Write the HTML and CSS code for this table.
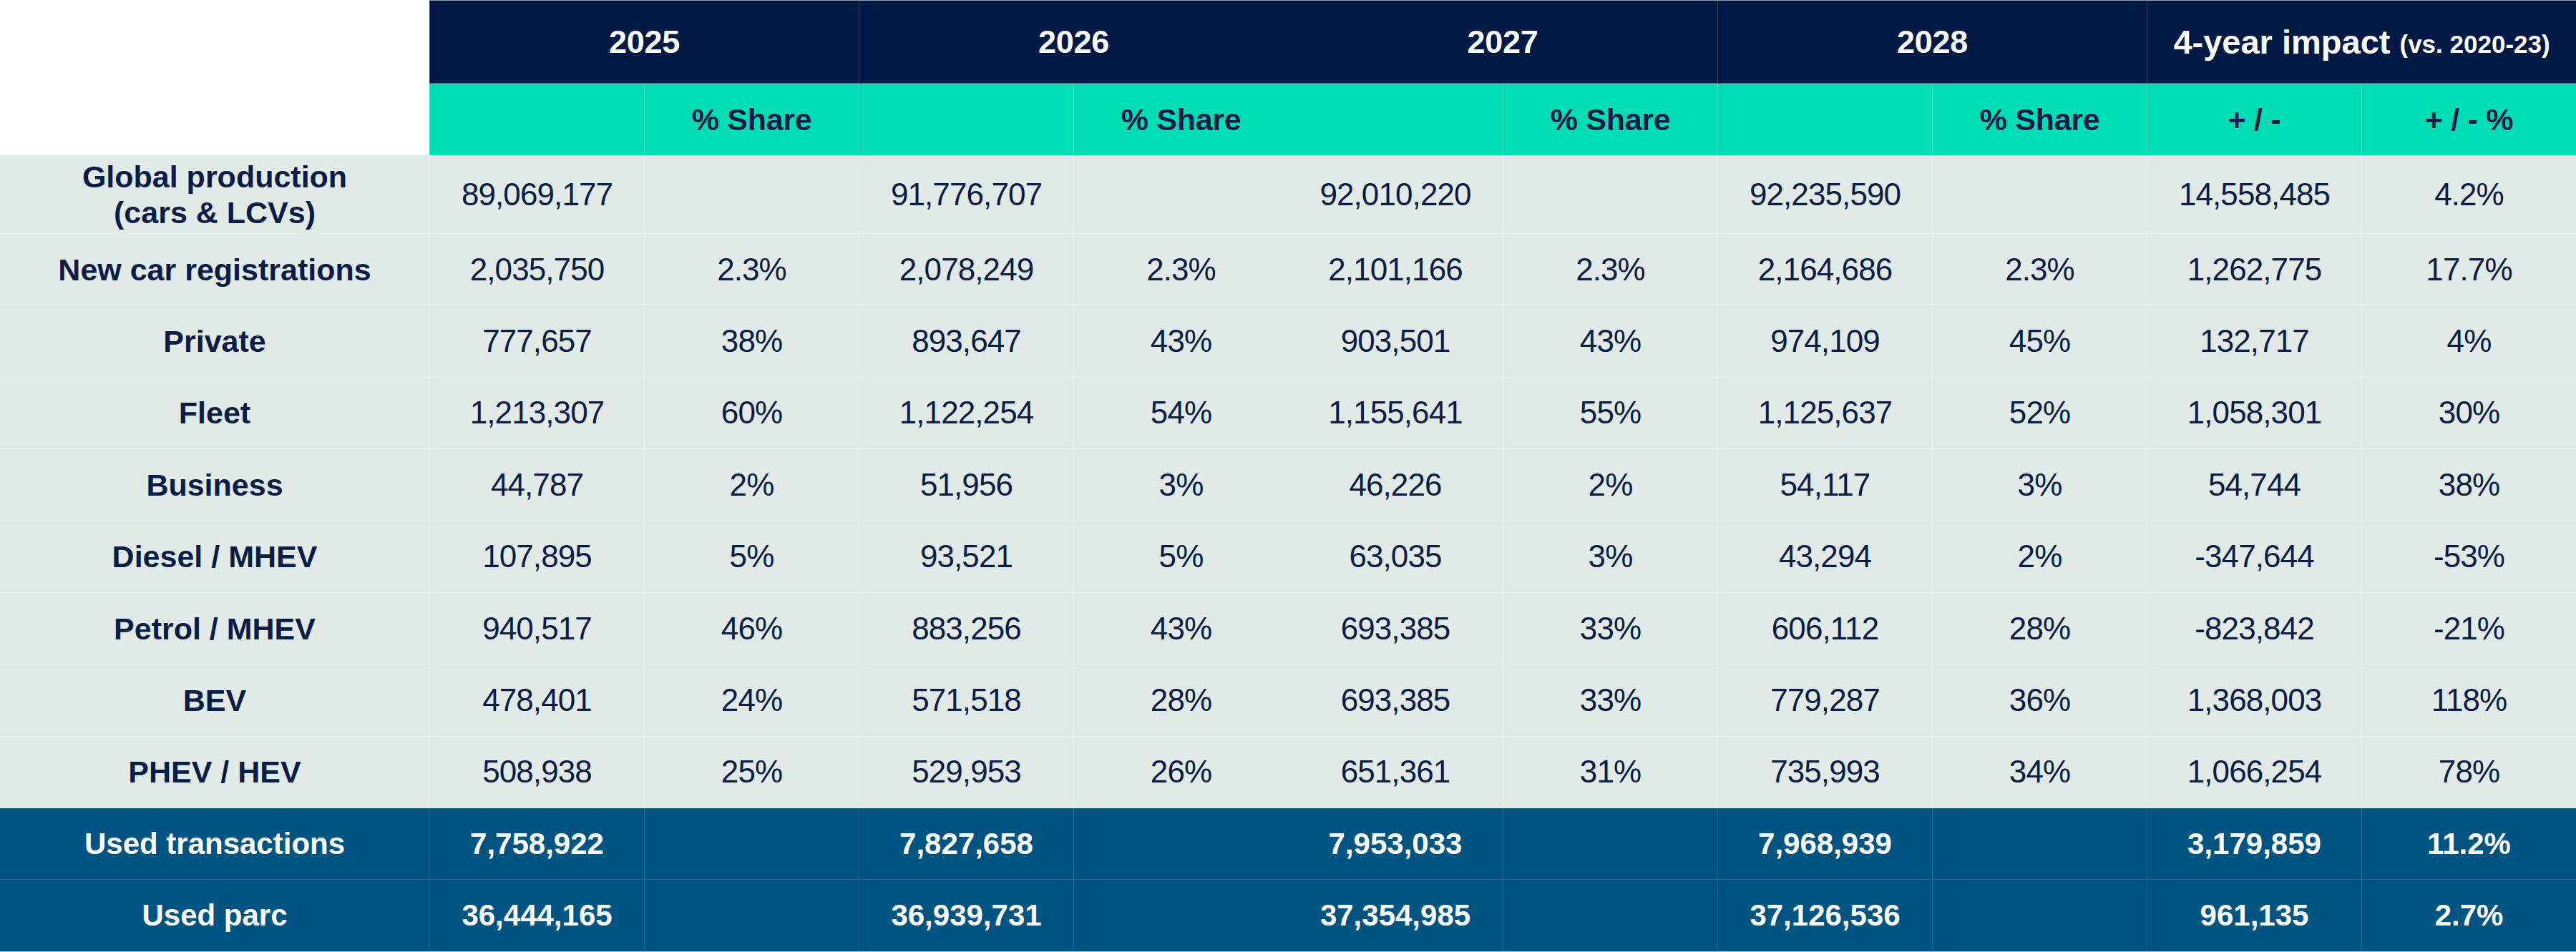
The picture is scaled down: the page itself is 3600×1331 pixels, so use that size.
FILE: index.html
```html
<!DOCTYPE html>
<html lang="en">
<head>
<meta charset="utf-8">
<title>Forecast table</title>
<link rel="stylesheet" href="styles.css">
</head>
<body>
<div class="grid">
  <div class="corner"></div>
  <div class="yr">2025</div>
  <div class="yr">2026</div>
  <div class="yr nb">2027</div>
  <div class="yr">2028</div>
  <div class="yr imp">4-year impact <span class="vs">(vs. 2020-23)</span></div>

  <div class="sub"></div>
  <div class="sub">% Share</div>
  <div class="sub"></div>
  <div class="sub">% Share</div>
  <div class="sub nb"></div>
  <div class="sub">% Share</div>
  <div class="sub"></div>
  <div class="sub">% Share</div>
  <div class="sub">+ / -</div>
  <div class="sub">+ / - %</div>

  <div class="lbl">Global production<br>(cars &amp; LCVs)</div>
  <div class="val">89,069,177</div><div class="val"></div>
  <div class="val">91,776,707</div><div class="val"></div>
  <div class="val nb">92,010,220</div><div class="val"></div>
  <div class="val">92,235,590</div><div class="val"></div>
  <div class="val">14,558,485</div><div class="val">4.2%</div>

  <div class="lbl">New car registrations</div>
  <div class="val">2,035,750</div><div class="val">2.3%</div>
  <div class="val">2,078,249</div><div class="val">2.3%</div>
  <div class="val nb">2,101,166</div><div class="val">2.3%</div>
  <div class="val">2,164,686</div><div class="val">2.3%</div>
  <div class="val">1,262,775</div><div class="val">17.7%</div>

  <div class="lbl">Private</div>
  <div class="val">777,657</div><div class="val">38%</div>
  <div class="val">893,647</div><div class="val">43%</div>
  <div class="val nb">903,501</div><div class="val">43%</div>
  <div class="val">974,109</div><div class="val">45%</div>
  <div class="val">132,717</div><div class="val">4%</div>

  <div class="lbl">Fleet</div>
  <div class="val">1,213,307</div><div class="val">60%</div>
  <div class="val">1,122,254</div><div class="val">54%</div>
  <div class="val nb">1,155,641</div><div class="val">55%</div>
  <div class="val">1,125,637</div><div class="val">52%</div>
  <div class="val">1,058,301</div><div class="val">30%</div>

  <div class="lbl">Business</div>
  <div class="val">44,787</div><div class="val">2%</div>
  <div class="val">51,956</div><div class="val">3%</div>
  <div class="val nb">46,226</div><div class="val">2%</div>
  <div class="val">54,117</div><div class="val">3%</div>
  <div class="val">54,744</div><div class="val">38%</div>

  <div class="lbl">Diesel / MHEV</div>
  <div class="val">107,895</div><div class="val">5%</div>
  <div class="val">93,521</div><div class="val">5%</div>
  <div class="val nb">63,035</div><div class="val">3%</div>
  <div class="val">43,294</div><div class="val">2%</div>
  <div class="val">-347,644</div><div class="val">-53%</div>

  <div class="lbl">Petrol / MHEV</div>
  <div class="val">940,517</div><div class="val">46%</div>
  <div class="val">883,256</div><div class="val">43%</div>
  <div class="val nb">693,385</div><div class="val">33%</div>
  <div class="val">606,112</div><div class="val">28%</div>
  <div class="val">-823,842</div><div class="val">-21%</div>

  <div class="lbl">BEV</div>
  <div class="val">478,401</div><div class="val">24%</div>
  <div class="val">571,518</div><div class="val">28%</div>
  <div class="val nb">693,385</div><div class="val">33%</div>
  <div class="val">779,287</div><div class="val">36%</div>
  <div class="val">1,368,003</div><div class="val">118%</div>

  <div class="lbl">PHEV / HEV</div>
  <div class="val">508,938</div><div class="val">25%</div>
  <div class="val">529,953</div><div class="val">26%</div>
  <div class="val nb">651,361</div><div class="val">31%</div>
  <div class="val">735,993</div><div class="val">34%</div>
  <div class="val">1,066,254</div><div class="val">78%</div>

  <div class="dlbl">Used transactions</div>
  <div class="dval">7,758,922</div><div class="dval"></div>
  <div class="dval">7,827,658</div><div class="dval"></div>
  <div class="dval nb">7,953,033</div><div class="dval"></div>
  <div class="dval">7,968,939</div><div class="dval"></div>
  <div class="dval">3,179,859</div><div class="dval">11.2%</div>

  <div class="dlbl last">Used parc</div>
  <div class="dval last">36,444,165</div><div class="dval last"></div>
  <div class="dval last">36,939,731</div><div class="dval last"></div>
  <div class="dval nb last">37,354,985</div><div class="dval last"></div>
  <div class="dval last">37,126,536</div><div class="dval last"></div>
  <div class="dval last">961,135</div><div class="dval last">2.7%</div>
</div>
</body>
</html>
```

FILE: styles.css
```css
html, body {
  margin: 0;
  padding: 0;
  background: #ffffff;
}

body {
  font-family: "Liberation Sans", Arial, Helvetica, sans-serif;
  color: #0a1d47;
}

.grid {
  display: grid;
  width: 3600px;
  grid-template-columns: 600px repeat(10, 300px);
  grid-template-rows: 117px 100px 110px repeat(8, 100.375px) 100px 101px;
}

.grid > div {
  box-sizing: border-box;
  display: flex;
  align-items: center;
  justify-content: center;
  text-align: center;
}

.corner {
  grid-row: span 2;
  background: #ffffff;
}

.yr {
  grid-column: span 2;
  background: #011944;
  color: #ffffff;
  font-weight: 700;
  font-size: 45px;
  border-top: 1px solid #939bad;
  border-bottom: 1px solid #5a6884;
  border-left: 1px solid #3a4868;
  letter-spacing: -0.3px;
}

.yr.imp {
  font-size: 47px;
  letter-spacing: 0;
  white-space: pre;
}

.yr .vs {
  font-size: 35px;
  margin-left: 0;
  position: relative;
  top: 3px;
}

.sub {
  background: #00ddb5;
  color: #0a1d47;
  font-weight: 700;
  font-size: 43px;
  border-left: 1px solid #35e3c4;
  letter-spacing: -0.3px;
}

.lbl {
  background: #e1eae7;
  font-weight: 700;
  font-size: 43px;
  line-height: 50px;
  border-bottom: 1px solid #eaf0ee;
}

.val {
  background: #e1eae7;
  font-size: 44px;
  font-weight: 400;
  letter-spacing: -0.9px;
  border-left: 1px solid #eaf0ee;
  border-bottom: 1px solid #eaf0ee;
}

.dlbl {
  background: #005481;
  color: #ffffff;
  font-weight: 700;
  font-size: 42px;
  border-bottom: 1px solid #1f6690;
}

.dval {
  background: #005481;
  color: #ffffff;
  font-weight: 700;
  font-size: 42px;
  border-left: 1px solid #1f6690;
  border-bottom: 1px solid #1f6690;
}

.dlbl.last,
.dval.last {
  border-bottom: 1px solid #a8c5da;
}

.grid > .nb {
  border-left: none;
}
```
